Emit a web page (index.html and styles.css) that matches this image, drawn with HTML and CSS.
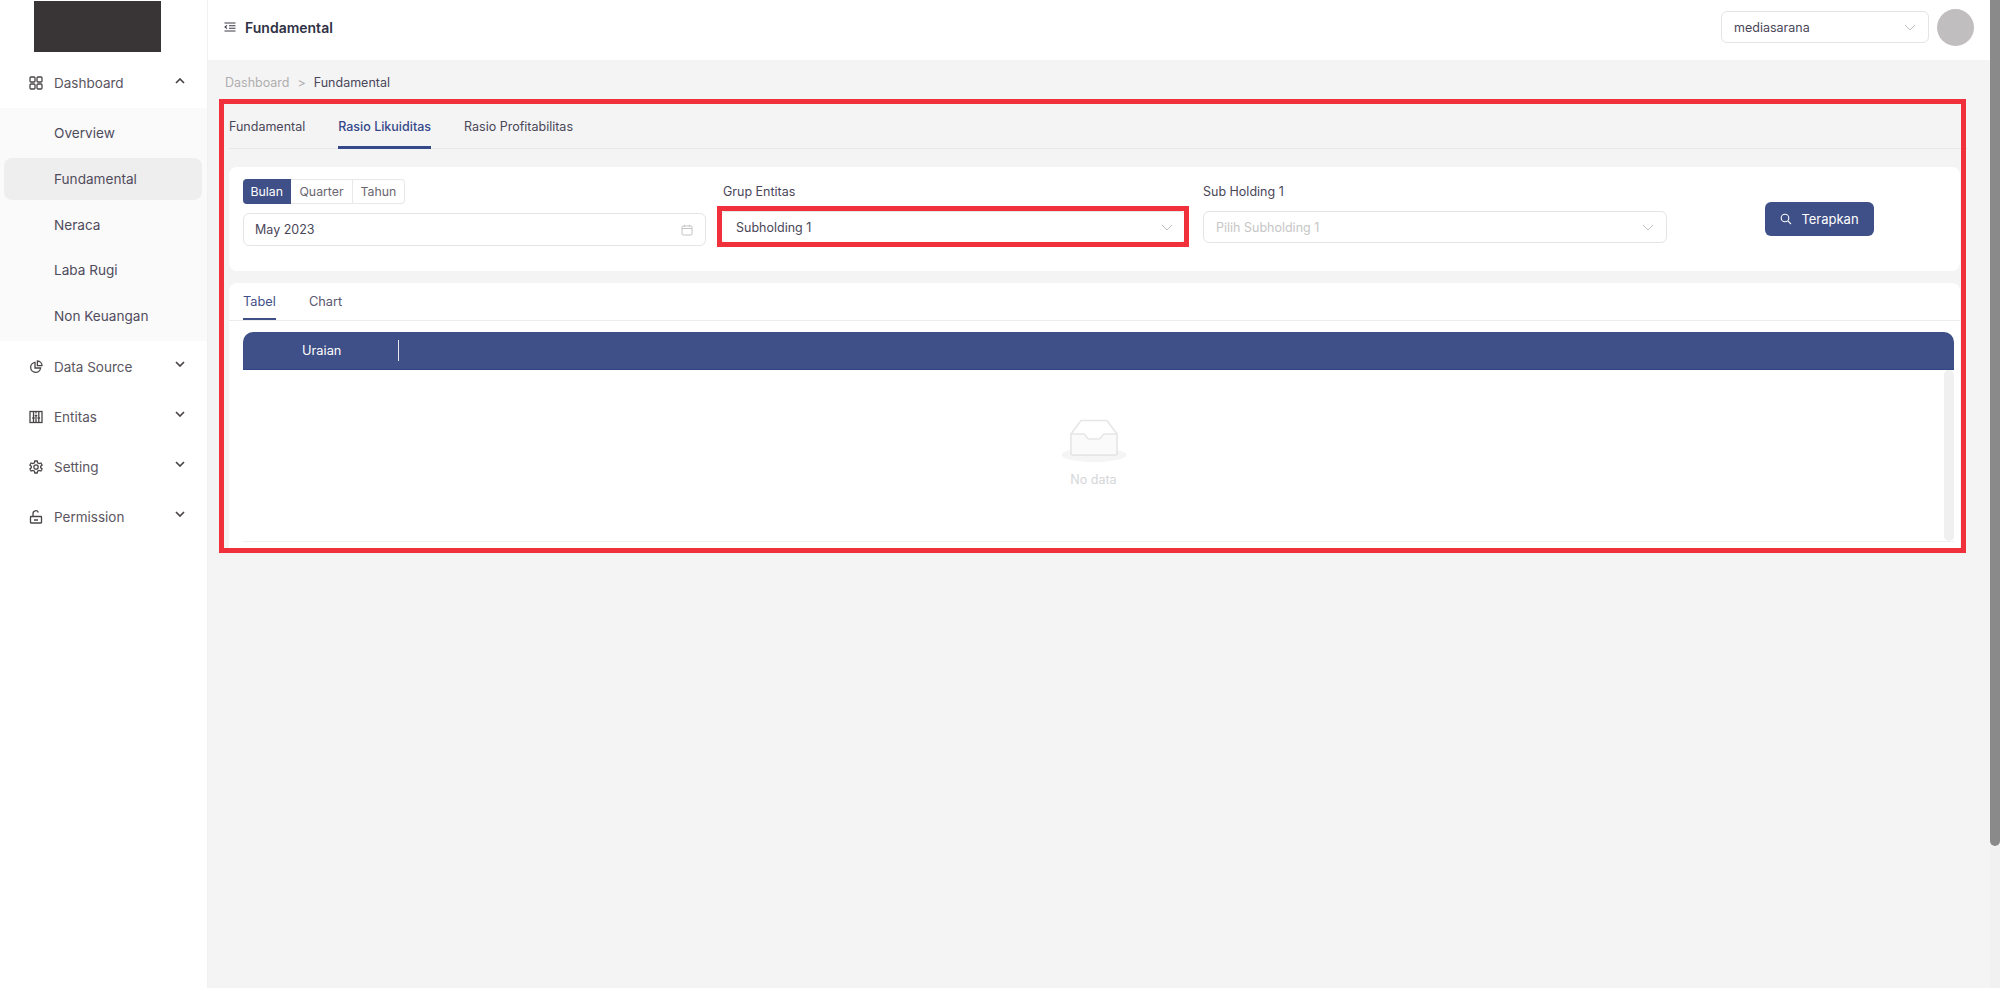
FILE: index.html
```html
<!DOCTYPE html>
<html lang="id">
<head>
    <meta charset="UTF-8">
    <title>Fundamental</title>
    <link rel="stylesheet" href="styles.css">
</head>
<body>
    <div class="layout">
        <aside class="sidebar">
            <div class="logo"></div>
            <div class="menu-item first">
                <svg class="menu-icon" viewBox="0 0 14 14"><rect x="1" y="1" width="5" height="5" rx="1"/><rect x="8" y="1" width="5" height="5" rx="1"/><rect x="1" y="8" width="5" height="5" rx="1"/><rect x="8" y="8" width="5" height="5" rx="1"/></svg>
                <span>Dashboard</span>
                <svg class="chevron" viewBox="0 0 10 6"><path d="M1 5l4-4 4 4"/></svg>
            </div>
            <div class="submenu">
                <div class="submenu-item">Overview</div>
                <div class="submenu-item active">Fundamental</div>
                <div class="submenu-item">Neraca</div>
                <div class="submenu-item">Laba Rugi</div>
                <div class="submenu-item">Non Keuangan</div>
            </div>
            <div class="menu-item">
                <svg class="menu-icon" viewBox="0 0 14 14"><path d="M6 2.4a5 5 0 1 0 5.600 5.600H6z"/><path d="M8.400 1a4.600 4.600 0 0 1 4.600 4.600H8.400z"/></svg>
                <span>Data Source</span>
                <svg class="chevron" viewBox="0 0 10 6"><path d="M1 1l4 4 4-4"/></svg>
            </div>
            <div class="menu-item">
                <svg class="menu-icon" viewBox="0 0 14 14"><rect x="1" y="1.500" width="12" height="11"/><path d="M4.500 1.500v11M7 1.500v2M7 6v6.500M9.800 1.500v11M3.200 8h2.600M5.700 5.500H8.300M8.500 8h2.600"/></svg>
                <span>Entitas</span>
                <svg class="chevron" viewBox="0 0 10 6"><path d="M1 1l4 4 4-4"/></svg>
            </div>
            <div class="menu-item">
                <svg class="menu-icon" viewBox="0 0 14 14"><path d="M5.800 1h2.400l.4 1.800 1.500.8 1.800-.6 1.200 2-1.400 1.200v1.600l1.400 1.200-1.200 2-1.800-.6-1.500.8L8.200 13H5.800l-.4-1.800-1.500-.8-1.800.6-1.200-2 1.400-1.200V6.200L.9 5l1.200-2 1.800.6 1.500-.8z"/><circle cx="7" cy="7" r="2.200"/></svg>
                <span>Setting</span>
                <svg class="chevron" viewBox="0 0 10 6"><path d="M1 1l4 4 4-4"/></svg>
            </div>
            <div class="menu-item">
                <svg class="menu-icon" viewBox="0 0 14 14"><rect x="1.500" y="6.500" width="11" height="6.500" rx=".5"/><path d="M4 6.500V3.500a2.800 2.800 0 0 1 5.400-1M5 10h4"/></svg>
                <span>Permission</span>
                <svg class="chevron" viewBox="0 0 10 6"><path d="M1 1l4 4 4-4"/></svg>
            </div>
        </aside>

        <div class="main">
            <header class="topbar">
                <svg class="fold-icon" viewBox="0 0 12 10"><path d="M.5 1h11M5 3.700h6.500M5 6.300h6.500M.5 9h11M3 3.300L1 5l2 1.700"/></svg>
                <div class="page-title">Fundamental</div>
                <div class="select top-select">
                    <span>mediasarana</span>
                    <svg class="select-arrow" viewBox="0 0 12 7"><path d="M1 1l5 5 5-5"/></svg>
                </div>
                <div class="avatar"></div>
            </header>

            <div class="content">
                <div class="breadcrumb">
                    <span class="crumb-link">Dashboard</span>
                    <span class="crumb-sep">&gt;</span>
                    <span>Fundamental</span>
                </div>

                <div class="tabs">
                    <div class="tab">Fundamental</div>
                    <div class="tab active">Rasio Likuiditas</div>
                    <div class="tab">Rasio Profitabilitas</div>
                </div>

                <div class="card filter-card">
                    <div class="filter-col">
                        <div class="segmented">
                            <div class="segment selected">Bulan</div>
                            <div class="segment">Quarter</div>
                            <div class="segment">Tahun</div>
                        </div>
                        <div class="select date-input">
                            <span>May 2023</span>
                            <svg class="calendar" viewBox="0 0 12 12"><rect x="1" y="2" width="10" height="9" rx="1"/><path d="M1 4.500h10M3.500 .8v2M8.500 .8v2"/></svg>
                        </div>
                    </div>
                    <div class="filter-col group-col">
                        <label>Grup Entitas</label>
                        <div class="select">
                            <span>Subholding 1</span>
                            <svg class="select-arrow" viewBox="0 0 12 7"><path d="M1 1l5 5 5-5"/></svg>
                        </div>
                    </div>
                    <div class="filter-col sub-col">
                        <label>Sub Holding 1</label>
                        <div class="select">
                            <span class="placeholder">Pilih Subholding 1</span>
                            <svg class="select-arrow" viewBox="0 0 12 7"><path d="M1 1l5 5 5-5"/></svg>
                        </div>
                    </div>
                    <button class="apply-btn">
                        <svg viewBox="0 0 12 12"><circle cx="5" cy="5" r="3.800"/><path d="M7.800 7.800L11 11"/></svg>
                        Terapkan
                    </button>
                </div>

                <div class="card table-card">
                    <div class="inner-tabs">
                        <div class="inner-tab active">Tabel</div>
                        <div class="inner-tab">Chart</div>
                    </div>
                    <div class="table-wrap">
                        <div class="table-head">
                            <div class="head-cell">Uraian</div>
                        </div>
                        <div class="table-body">
                            <div class="empty">
                                <svg class="empty-icon" width="66" height="44" viewBox="0 0 66 44">
                                    <ellipse class="empty-shadow" cx="33" cy="36" rx="32.500" ry="7"/>
                                    <path class="empty-box" d="M10 15L20 1.500h26L56 15v19a2 2 0 0 1-2 2H12a2 2 0 0 1-2-2z"/>
                                    <path class="empty-tray" d="M10 15h13c2 0 2 5 5 5h10c3 0 3-5 5-5h13v19a2 2 0 0 1-2 2H12a2 2 0 0 1-2-2z"/>
                                </svg>
                                <div class="empty-text">No data</div>
                            </div>
                            <div class="table-scroll"></div>
                        </div>
                    </div>
                </div>
            </div>
        </div>

        <div class="page-scroll"><div class="page-thumb"></div></div>
    </div>

    <!-- red annotation boxes drawn over the page -->
    <div class="mark mark-outer"></div>
    <div class="mark mark-inner"></div>
</body>
</html>
```

FILE: styles.css
```css
* {
    margin: 0;
    padding: 0;
    box-sizing: border-box;
}

html, body {
    height: 100%;
    overflow: hidden;
}

body {
    font-family: Inter, 'Noto Sans', sans-serif;
    font-size: 13px;
    color: #4a4658;
    background: #f4f4f4;
}

.layout {
    display: flex;
    height: 988px;
}

/* sidebar */
.sidebar {
    width: 208px;
    flex-shrink: 0;
    background: #fff;
    border-right: 1px solid #f1f1f1;
}

.logo {
    width: 127px;
    height: 51px;
    margin: 1px 0 0 34px;
    background: #393536;
}

.menu-item {
    display: flex;
    align-items: center;
    height: 50px;
    padding: 0 22px 0 29px;
    font-size: 13.500px;
    color: #5a5560;
}

.menu-item.first {
    height: 56px;
    padding-top: 5px;
}

.menu-item span {
    margin-left: 11px;
    flex: 1;
}

.menu-icon {
    width: 14px;
    height: 14px;
    fill: none;
    stroke: #4a4648;
    stroke-width: 1.300;
}

.chevron {
    width: 10px;
    height: 6px;
    margin-top: -6px;
    fill: none;
    stroke: #4a4648;
    stroke-width: 1.700;
}

.first .chevron {
    margin-top: -3px;
}

.submenu {
    height: 233px;
    margin-bottom: 1px;
    padding: 4px 5px 0 4px;
    background: #fafafa;
}

.submenu-item {
    display: flex;
    align-items: center;
    height: 42px;
    margin-bottom: 3.800px;
    padding-left: 50px;
    font-size: 13.600px;
    border-radius: 8px;
    color: #4f4b5c;
}

.submenu-item.active {
    background: #efeeee;
}

/* top bar */
.main {
    flex: 1;
    min-width: 0;
    display: flex;
    flex-direction: column;
}

.topbar {
    display: flex;
    align-items: center;
    height: 60px;
    padding: 0 16px 6px 16px;
    background: #fff;
}

.fold-icon {
    width: 12px;
    height: 10px;
    fill: none;
    stroke: #3a3a44;
    stroke-width: 1.100;
}

.page-title {
    flex: 1;
    margin-left: 9px;
    font-size: 14px;
    font-weight: 600;
    color: #2f3145;
}

.select {
    display: flex;
    align-items: center;
    justify-content: space-between;
    height: 32px;
    padding: 0 12px;
    background: #fff;
    border: 1px solid #e4e4e4;
    border-radius: 6px;
    font-size: 12.500px;
}

.top-select {
    width: 208px;
}

.select-arrow {
    width: 12px;
    height: 7px;
    fill: none;
    stroke: #c0c0c0;
    stroke-width: 1;
}

.avatar {
    width: 37px;
    height: 37px;
    margin-left: 8px;
    border-radius: 50%;
    background: #c0bebf;
}

/* content */
.content {
    flex: 1;
    padding: 0 0 0 21px;
}

.breadcrumb {
    display: flex;
    align-items: center;
    gap: 8px;
    height: 44px;
    margin-left: -4px;
    font-size: 12.500px;
    color: #4a4658;
}

.crumb-link {
    color: #b0aeb0;
}

.crumb-sep {
    color: #b0aeb0;
}

.tabs {
    display: flex;
    gap: 33px;
    height: 45px;
    margin-right: 22px;
    border-bottom: 1px solid #e9e9e9;
}

.tab {
    padding-top: 15px;
    font-size: 12.500px;
    white-space: nowrap;
}

.tab.active {
    color: #34488a;
    font-weight: 500;
    border-bottom: 3px solid #34488a;
    margin-bottom: -1px;
}

.card {
    background: #fff;
    border-radius: 8px;
    margin-right: 30px;
}

.filter-card {
    display: flex;
    height: 104px;
    margin-top: 18px;
    padding: 12px 0 0 14px;
}

.filter-col {
    display: flex;
    flex-direction: column;
}

.filter-col:first-child {
    width: 463px;
}

.group-col {
    width: 466px;
    margin-left: 14px;
}

.sub-col {
    width: 464px;
    margin-left: 17px;
}

.filter-col label {
    height: 32px;
    padding: 5px 0 0 3px;
    font-size: 12.500px;
}

.sub-col label {
    padding-left: 0;
}

.group-col .select {
    padding-left: 15px;
}

.segmented {
    display: flex;
    height: 25px;
    margin-bottom: 9px;
}

.segment {
    display: flex;
    align-items: center;
    padding: 0 8px;
    font-size: 12.300px;
    border: 1px solid #e8e8e8;
    border-left: 0;
    color: #6a6670;
}

.segment:last-child {
    border-radius: 0 4px 4px 0;
}

.segment.selected {
    padding: 0 7.500px;
    background: #3f4f87;
    border-color: #3f4f87;
    border-radius: 4px 0 0 4px;
    color: #fff;
}

.date-input {
    height: 33px;
    padding-left: 11px;
}

.calendar {
    width: 12px;
    height: 12px;
    fill: none;
    stroke: #c4c4c4;
    stroke-width: 1;
}

.placeholder {
    color: #c6c6c6;
}

.apply-btn {
    display: flex;
    align-items: center;
    justify-content: center;
    gap: 9px;
    width: 109px;
    height: 34px;
    margin: 23px 0 0 98px;
    background: #3f4f87;
    border: 0;
    border-radius: 6px;
    color: #fff;
    font-family: inherit;
    font-size: 13px;
}

.apply-btn svg {
    width: 12px;
    height: 12px;
    fill: none;
    stroke: #fff;
    stroke-width: 1.100;
}

.table-card {
    height: 270px;
    margin-top: 12px;
    border-radius: 8px 8px 0 0;
}

.inner-tabs {
    display: flex;
    gap: 33px;
    height: 38px;
    padding-left: 14px;
    border-bottom: 1px solid #ececec;
}

.inner-tab {
    padding-top: 11px;
    font-size: 12.800px;
    color: #5a5670;
}

.inner-tab.active {
    color: #3f4f87;
    border-bottom: 2px solid #3f4f87;
}

.table-wrap {
    margin: 11px 6px 0 14px;
}

.table-head {
    display: flex;
    align-items: center;
    height: 38px;
    background: #3f4f87;
    border-bottom: 1px solid #2f4585;
    border-radius: 10px 10px 0 0;
}

.head-cell {
    display: flex;
    align-items: center;
    width: 156px;
    height: 21px;
    padding-left: 59px;
    color: #fff;
    font-size: 12.800px;
    border-right: 1.500px solid #e8e8ee;
    white-space: nowrap;
}

.table-body {
    position: relative;
    display: flex;
    height: 172px;
    border-bottom: 1px solid #f0f0f0;
}

.empty {
    flex: 1;
    display: flex;
    flex-direction: column;
    align-items: center;
    padding-top: 49px;
}

.empty-shadow {
    fill: #f5f5f5;
}

.empty-box {
    fill: #fff;
    stroke: #e6e6e6;
    stroke-width: 1.500;
}

.empty-tray {
    fill: #fafafa;
    stroke: #e6e6e6;
    stroke-width: 1.500;
}

.empty-text {
    margin-top: 9px;
    font-size: 12.500px;
    color: #d4d6d8;
}

.table-scroll {
    width: 10px;
    background: #f0f0f0;
    border-radius: 5px;
}

/* page scrollbar */
.page-scroll {
    width: 10px;
    flex-shrink: 0;
    background: #f1f1f1;
}

.page-thumb {
    height: 846px;
    background: #8a8a8a;
    border-radius: 0 0 5px 5px;
}

/* annotation boxes, they sit on top of the screenshot */
.mark {
    position: absolute;
    border: 5px solid #f0303a;
}

.mark-outer {
    left: 219px;
    top: 99px;
    width: 1747px;
    height: 454px;
}

.mark-inner {
    left: 717px;
    top: 206px;
    width: 472px;
    height: 41px;
}
```
